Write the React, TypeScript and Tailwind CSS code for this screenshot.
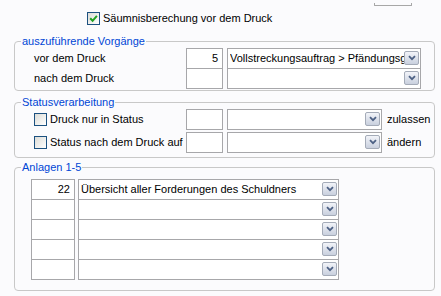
import React from 'react';

function Check({ checked }: { checked?: boolean }) {
  return (
    <span className="flex h-[13px] w-[13px] shrink-0 items-center justify-center border border-[#1c5180] bg-linear-to-br from-[#dcdcd7] to-white">
      {checked && (
        <svg width="9" height="9" viewBox="0 0 9 9">
          <path d="M1.2 4.3 L3.6 6.8 L7.9 1.8" stroke="#21a121" strokeWidth="2" fill="none" />
        </svg>
      )}
    </span>
  );
}

function DropBtn() {
  return (
    <span className="flex h-[14px] w-[15px] shrink-0 items-center justify-center rounded-[2px] border border-[#a4abb8] bg-linear-to-b from-[#f2f4f9] to-[#c9d0de]">
      <svg width="8" height="6" viewBox="0 0 8 6">
        <path d="M1 1.2 L4 4.2 L7 1.2" stroke="#4d6185" strokeWidth="1.8" fill="none" />
      </svg>
    </span>
  );
}

function NumBox({ value, className }: { value?: string; className: string }) {
  return (
    <div className={`flex h-[21px] items-center justify-end border border-[#a7a7aa] bg-white pr-[4px] ${className}`}>
      {value}
    </div>
  );
}

function Combo({ text, className }: { text?: string; className: string }) {
  return (
    <div className={`flex h-[21px] items-center border border-[#a7a7aa] bg-white pl-[2px] pr-[1px] ${className}`}>
      <span className="flex-1 overflow-hidden whitespace-nowrap">{text}</span>
      <DropBtn />
    </div>
  );
}

function Group({ title, className, children }: { title: string; className: string; children: React.ReactNode }) {
  return (
    <fieldset className={`ml-[14px] w-[421px] rounded-[4px] border border-[#c8c8c8] ${className}`}>
      <legend className="ml-[6px] px-[1px] leading-[13px] text-[#0046d5]">{title}</legend>
      {children}
    </fieldset>
  );
}

export default function App() {
  return (
    <div className="flex h-[296px] w-[441px] flex-col overflow-hidden bg-[#fbfbfd] font-['Liberation_Sans',Arial,sans-serif] text-[11px] text-black">
      <div className="flex justify-end pr-[29px]">
        <div className="mt-[3px] h-[3px] w-[38px] rounded-b-[1px] border-x border-b border-[#a7a7a7]" />
      </div>

      <div className="mt-[4px] flex items-center gap-[3px] pl-[87px]">
        <Check checked />
        <span>Säumnisberechung vor dem Druck</span>
      </div>

      <Group title="auszuführende Vorgänge" className="mt-[8px] pb-[1px]">
        <div className="flex items-center">
          <span className="w-[171px] pl-[19px]">vor dem Druck</span>
          <NumBox value="5" className="w-[37px]" />
          <Combo text="Vollstreckungsauftrag > Pfändungsg" className="ml-[4px] w-[194px]" />
        </div>
        <div className="-mt-px flex items-center">
          <span className="w-[171px] pl-[19px]">nach dem Druck</span>
          <NumBox className="w-[37px]" />
          <Combo className="ml-[4px] w-[194px]" />
        </div>
      </Group>

      <Group title="Statusverarbeitung" className="mt-[5px] pb-[4px]">
        <div className="flex items-center">
          <div className="flex w-[171px] items-center gap-[3px] pl-[19px]">
            <Check />
            <span>Druck nur in Status</span>
          </div>
          <NumBox className="w-[37px]" />
          <Combo className="ml-[4px] w-[155px]" />
          <span className="ml-[5px]">zulassen</span>
        </div>
        <div className="mt-[2px] flex items-center">
          <div className="flex w-[171px] items-center gap-[3px] pl-[19px]">
            <Check />
            <span>Status nach dem Druck auf</span>
          </div>
          <NumBox className="w-[37px]" />
          <Combo className="ml-[4px] w-[155px]" />
          <span className="ml-[5px]">ändern</span>
        </div>
      </Group>

      <Group title="Anlagen 1-5" className="mt-[3px] pt-[5px] pb-[10px]">
        {[
          ['22', 'Übersicht aller Forderungen des Schuldners'],
          ['', ''],
          ['', ''],
          ['', ''],
          ['', ''],
        ].map(([n, t], i) => (
          <div key={i} className={`flex items-center pl-[16px] ${i > 0 ? '-mt-px' : ''}`}>
            <NumBox value={n} className="w-[44px]" />
            <Combo text={t} className="ml-[3px] w-[261px]" />
          </div>
        ))}
      </Group>
    </div>
  );
}
